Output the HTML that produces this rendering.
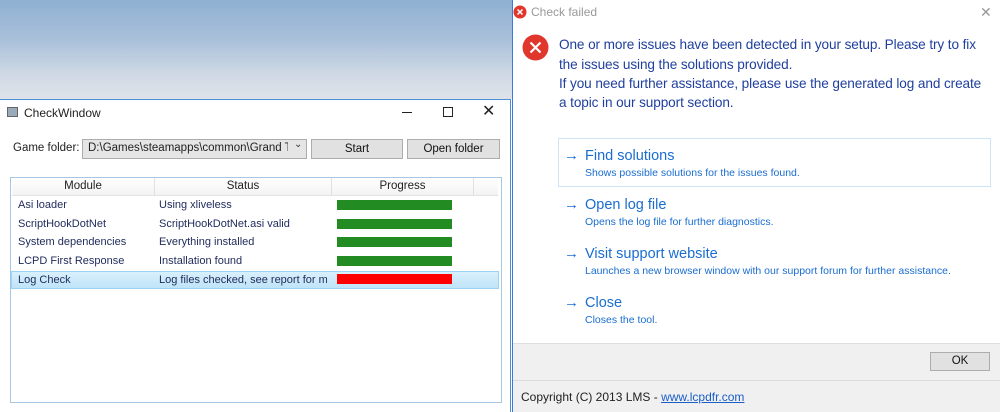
<!DOCTYPE html>
<html><head><meta charset="utf-8"><style>
*{margin:0;padding:0;box-sizing:border-box}
body{width:1000px;height:412px;overflow:hidden;position:relative;font-family:"Liberation Sans",sans-serif;background:#fff}
.a{position:absolute;white-space:nowrap}
.sky{left:0;top:0;width:512px;height:99px;background:linear-gradient(180deg,#8fb0d2 0%,#a9c0da 40%,#cfd9e4 75%,#dfe3e8 100%)}
.lw{left:0;top:99px;width:511px;height:313px;background:#fff;border-top:1px solid #4a90d9;border-right:1px solid #4a90d9}
.t{font-size:11px;color:#222}
.btn{background:#e1e1e1;border:1px solid #adadad;font-size:11.5px;text-align:center;color:#111}
.list{left:10px;top:177px;width:492px;height:226px;border:1px solid #a9c6e2;background:#fff}
.hd{font-size:11.5px;color:#222;text-align:center;top:180px}
.r{font-size:11px;color:#1e2a5a}
.bar{background:#228b22;width:115px;height:10px;left:337px}
.rd{left:512px;top:0;width:488px;height:412px;background:#fff;border-left:1px solid #3a7bd5}
.msg{font-size:13.6px;color:#1f3f9e;left:559px;letter-spacing:-0.1px}
.ct{font-size:14.5px;color:#1a6dd0;left:585px}
.cs{font-size:10.5px;color:#1a6dd0;left:585px}
.ar{font-size:15px;color:#1a6dd0;left:564px}
</style></head><body>
<div class="a sky"></div>
<div class="a lw"></div>
<div class="a" style="left:7px;top:107px;width:11px;height:10px;border:1px solid #666;background:#9ab"></div>
<div class="a t" style="left:24px;top:106px;font-size:12px">CheckWindow</div>
<div class="a" style="left:402px;top:112px;width:10px;height:1px;background:#222"></div>
<div class="a" style="left:443px;top:107px;width:10px;height:10px;border:1px solid #222"></div>
<div class="a" style="left:482px;top:101px;font-size:16px;color:#222">✕</div>
<div class="a t" style="left:13px;top:142px;font-size:11.5px">Game folder:</div>
<div class="a" style="left:82px;top:139px;width:225px;height:20px;background:#e5e5e5;border:1px solid #acacac"></div>
<div class="a t" style="left:88px;top:142px;width:200px;overflow:hidden;font-size:11.5px">D:\Games\steamapps\common\Grand The</div>
<div class="a" style="left:294px;top:139px;font-size:10px;color:#333">⌄</div>
<div class="a btn" style="left:311px;top:139px;width:92px;height:20px;line-height:18px">Start</div>
<div class="a btn" style="left:407px;top:139px;width:93px;height:20px;line-height:18px">Open folder</div>
<div class="a list"></div>
<div class="a" style="left:12px;top:178px;width:486px;height:18px;background:linear-gradient(#fff,#f3f3f3);border-bottom:1px solid #e2e2e2"></div>
<div class="a" style="left:154px;top:178px;width:1px;height:18px;background:#e0e0e0"></div>
<div class="a" style="left:331px;top:178px;width:1px;height:18px;background:#e0e0e0"></div>
<div class="a" style="left:473px;top:178px;width:1px;height:18px;background:#e0e0e0"></div>
<div class="a hd" style="left:12px;width:142px">Module</div>
<div class="a hd" style="left:155px;width:176px">Status</div>
<div class="a hd" style="left:332px;width:141px">Progress</div>
<div class="a" style="left:11px;top:271px;width:488px;height:18px;background:linear-gradient(#d9f0fc,#bfe4f8);border:1px solid #9bd3f3"></div>
<div class="a r" style="left:18px;top:199px">Asi loader</div>
<div class="a r" style="left:159px;top:199px">Using xliveless</div>
<div class="a bar" style="top:200px"></div>
<div class="a r" style="left:18px;top:218px">ScriptHookDotNet</div>
<div class="a r" style="left:159px;top:218px">ScriptHookDotNet.asi valid</div>
<div class="a bar" style="top:219px"></div>
<div class="a r" style="left:18px;top:236px">System dependencies</div>
<div class="a r" style="left:159px;top:236px">Everything installed</div>
<div class="a bar" style="top:237px"></div>
<div class="a r" style="left:18px;top:255px">LCPD First Response</div>
<div class="a r" style="left:159px;top:255px">Installation found</div>
<div class="a bar" style="top:256px"></div>
<div class="a r" style="left:18px;top:274px">Log Check</div>
<div class="a r" style="left:159px;top:274px;width:168px;overflow:hidden">Log files checked, see report for more</div>
<div class="a bar" style="top:274px;background:#f00"></div>

<div class="a rd"></div>
<svg class="a" style="left:513px;top:5px" width="14" height="14"><circle cx="7" cy="7" r="6.5" fill="#e0362b"/><path d="M4.5 4.5l5 5M9.5 4.5l-5 5" stroke="#fff" stroke-width="1.5"/></svg>
<div class="a" style="left:531px;top:5px;font-size:12px;color:#999">Check failed</div>
<div class="a" style="left:980px;top:4px;font-size:14px;color:#999">✕</div>
<svg class="a" style="left:522px;top:34px" width="27" height="27"><circle cx="13.5" cy="13.5" r="13" fill="#e0362b"/><path d="M8.5 8.5l10 10M18.5 8.5l-10 10" stroke="#fff" stroke-width="2.2"/></svg>
<div class="a msg" style="top:37px">One or more issues have been detected in your setup. Please try to fix</div>
<div class="a msg" style="top:57px">the issues using the solutions provided.</div>
<div class="a msg" style="top:76px">If you need further assistance, please use the generated log and create</div>
<div class="a msg" style="top:95px">a topic in our support section.</div>
<div class="a" style="left:558px;top:138px;width:433px;height:49px;border:1px solid #cfe3f6"></div>
<div class="a ar" style="top:147px">→</div><div class="a ct" style="top:148px">Find solutions</div><div class="a cs" style="top:167px">Shows possible solutions for the issues found.</div>
<div class="a ar" style="top:196px">→</div><div class="a ct" style="top:197px">Open log file</div><div class="a cs" style="top:216px">Opens the log file for further diagnostics.</div>
<div class="a ar" style="top:245px">→</div><div class="a ct" style="top:246px">Visit support website</div><div class="a cs" style="top:265px">Launches a new browser window with our support forum for further assistance.</div>
<div class="a ar" style="top:294px">→</div><div class="a ct" style="top:295px">Close</div><div class="a cs" style="top:314px">Closes the tool.</div>
<div class="a" style="left:513px;top:343px;width:487px;height:69px;background:#f0f0f0;border-top:1px solid #dfdfdf"></div>
<div class="a" style="left:513px;top:380px;width:487px;height:1px;background:#dcdcdc"></div>
<div class="a btn" style="left:930px;top:352px;width:60px;height:19px;line-height:17px">OK</div>
<div class="a t" style="left:521px;top:390px;font-size:12px">Copyright (C) 2013 LMS - <span style="color:#1a5ec8;text-decoration:underline">www.lcpdfr.com</span></div>
</body></html>
